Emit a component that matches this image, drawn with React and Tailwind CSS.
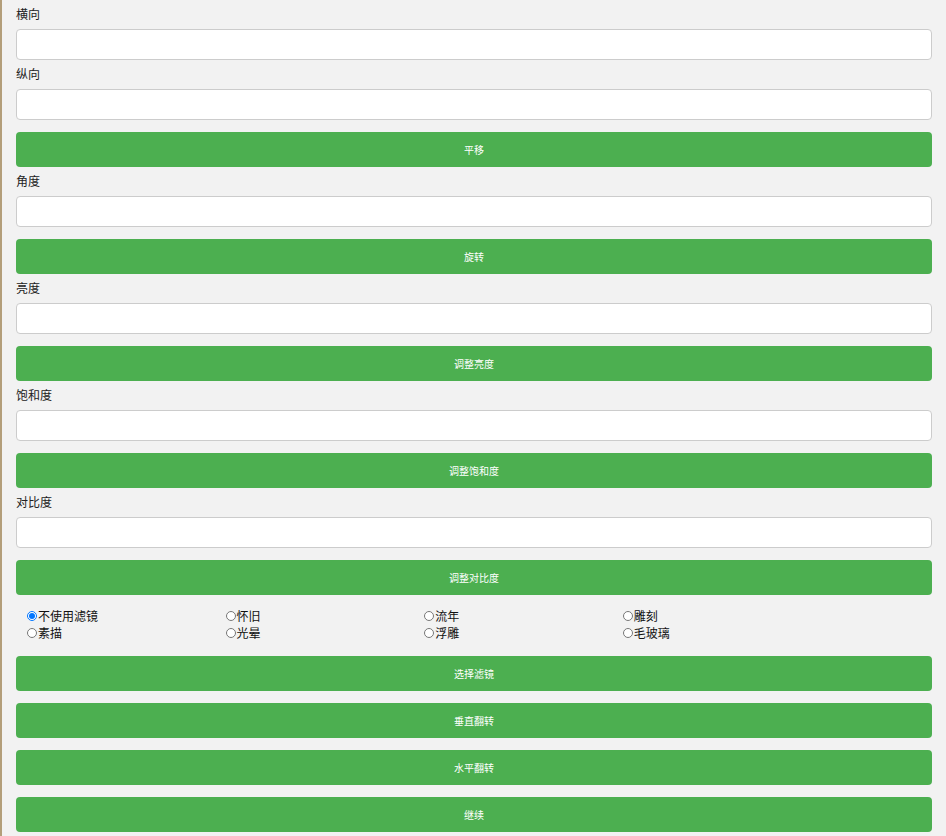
import React from "react";

const font = {
  fontFamily: '"Noto Sans CJK SC", "Liberation Sans", sans-serif',
};

const sections = [
  { fields: ["横向", "纵向"], button: "平移" },
  { fields: ["角度"], button: "旋转" },
  { fields: ["亮度"], button: "调整亮度" },
  { fields: ["饱和度"], button: "调整饱和度" },
  { fields: ["对比度"], button: "调整对比度" },
];

const filters = [
  "不使用滤镜",
  "怀旧",
  "流年",
  "雕刻",
  "素描",
  "光晕",
  "浮雕",
  "毛玻璃",
];

const Btn = ({ children, className = "" }) => (
  <button
    className={`block w-full h-[35px] rounded-[4px] bg-[#4caf50] text-white text-[10px] leading-[35px] ${className}`}
  >
    {children}
  </button>
);

const Field = ({ label }) => (
  <div>
    <div className="pt-[4px] h-[24px] text-[12px] leading-[19px] text-[#222] mb-[5px]">
      {label}
    </div>
    <input
      type="text"
      className="block w-full h-[31px] rounded-[4px] border border-[#cccccc] bg-white outline-none"
    />
  </div>
);

const App = () => {
  return (
    <div
      className="min-h-screen bg-[#f2f2f2] border-l-2 border-[#b39e7a] pl-[14px] pr-[14px]"
      style={font}
    >
      {sections.map((s) => (
        <div key={s.button}>
          {s.fields.map((f) => (
            <Field key={f} label={f} />
          ))}
          <Btn className="mt-[12px]">{s.button}</Btn>
        </div>
      ))}

      <div className="mt-[12px] pl-[11px] grid grid-cols-[repeat(4,198.6px)]">
        {filters.map((f, i) => (
          <label
            key={f}
            className="flex items-center h-[17px] overflow-hidden text-[12px] leading-[16px] text-[#111]"
          >
            <input
              type="radio"
              name="filter"
              defaultChecked={i === 0}
              className="m-0 mr-[1px] w-[10px] h-[10px]"
            />
            {f}
          </label>
        ))}
      </div>

      <Btn className="mt-[15px]">选择滤镜</Btn>
      <Btn className="mt-[12px]">垂直翻转</Btn>
      <Btn className="mt-[12px]">水平翻转</Btn>
      <Btn className="mt-[12px]">继续</Btn>
    </div>
  );
};

export default App;
